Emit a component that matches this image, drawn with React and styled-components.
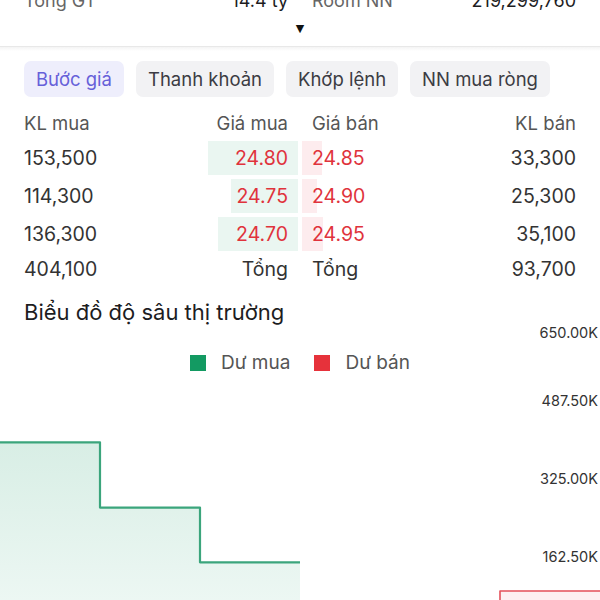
import React from 'react'
import styled, { createGlobalStyle } from 'styled-components'

const GlobalStyle = createGlobalStyle`
    body {
        margin: 0;
        background: #ffffff;
        font-family: Inter, 'Noto Sans', sans-serif;
        overflow: hidden;
    }
`;

const Page = styled.div`
    width: 600px;
    height: 600px;
    overflow: hidden;
    background: #ffffff;
`;

const StatsRow = styled.div`
    display: grid;
    grid-template-columns: 1fr 1fr;
    column-gap: 24px;
    padding: 0 24px;
    margin-top: -11px;
    font-size: 18px;
    line-height: 24px;
`;

const Stat = styled.div`
    display: flex;
    justify-content: space-between;
`;

const StatLabel = styled.span`
    color: #666666;
`;

const StatValue = styled.span`
    color: #1d1d1f;
`;

const Toggle = styled.div`
    height: 33px;
    padding-bottom: 3px;
    box-sizing: border-box;
    display: flex;
    align-items: center;
    justify-content: center;
    font-family: 'DejaVu Sans', sans-serif;
    font-size: 11px;
    color: #111111;
`;

const Divider = styled.div`
    height: 4px;
    border-top: 1px solid #e8e8e8;
    background: linear-gradient(#f4f4f4, #ffffff);
`;

const Tabs = styled.div`
    display: flex;
    gap: 12px;
    padding: 0 24px;
    margin-top: 10px;
`;

const Tab = styled.div`
    height: 36px;
    padding: 0 12px;
    display: flex;
    align-items: center;
    border-radius: 7px;
    font-size: 18.5px;
    background: ${p => (p.$active ? '#eeeefc' : '#f2f2f4')};
    color: ${p => (p.$active ? '#6660d9' : '#3c3c43')};
`;

const Book = styled.div`
    padding: 0 24px;
    margin-top: 10px;
`;

const BookRow = styled.div`
    display: grid;
    grid-template-columns: 1fr 1fr;
    column-gap: 4px;
    height: ${p => p.$h}px;
    font-size: ${p => (p.$head ? 18.5 : 19.5)}px;
    color: ${p => (p.$head ? '#555555' : '#333333')};
`;

const Half = styled.div`
    position: relative;
    display: flex;
    align-items: center;
    justify-content: space-between;
    padding: ${p => (p.$side === 'buy' ? '0 10px 0 0' : '0 0 0 10px')};
`;

const Bar = styled.div`
    position: absolute;
    top: 2px;
    bottom: 2px;
    ${p => (p.$side === 'buy' ? 'right: 0;' : 'left: 0;')}
    background: ${p => (p.$side === 'buy' ? '#eaf6f1' : '#fdecee')};
`;

const Cell = styled.span`
    position: relative;
    color: ${p => (p.$price ? '#e0333c' : 'inherit')};
`;

const Title = styled.div`
    margin-top: 13px;
    padding: 0 24px;
    font-size: 22px;
    line-height: 28px;
    color: #1d1d1f;
`;

const Chart = styled.div`
    position: relative;
    height: 300px;
`;

const Plot = styled.svg`
    position: absolute;
    left: 0;
    top: 0;
`;

const Legend = styled.div`
    position: relative;
    display: flex;
    justify-content: center;
    align-items: center;
    padding-top: 25px;
    line-height: 24px;
    font-size: 19px;
    color: #555555;
`;

const LegendItem = styled.div`
    display: flex;
    align-items: center;
    gap: 15px;
    margin: 0 12px;
`;

const Swatch = styled.span`
    width: 16px;
    height: 16px;
    background: ${p => p.$color};
`;

const rows = [
    { buyVol: '153,500', buy: '24.80', bv: 153500, sell: '24.85', sellVol: '33,300', sv: 33300 },
    { buyVol: '114,300', buy: '24.75', bv: 114300, sell: '24.90', sellVol: '25,300', sv: 25300 },
    { buyVol: '136,300', buy: '24.70', bv: 136300, sell: '24.95', sellVol: '35,100', sv: 35100 },
];

const barWidth = v => (v / 153500) * 90;

// chart scale: px per 1K and zero line, relative to chart top
const yOf = k => 309.8 - k * 0.4789;

const ticks = [
    { label: '650.00K', y: 8 },
    { label: '487.50K', y: 76 },
    { label: '325.00K', y: 154 },
    { label: '162.50K', y: 232 },
];

const App = () => {
    const b1 = yOf(404.1), b2 = yOf(267.8), b3 = yOf(153.5);
    const s1 = yOf(33.3), s2 = yOf(58.6), s3 = yOf(93.7);
    const bottom = 310;

    return (
        <Page>
            <GlobalStyle />
            <StatsRow>
                <Stat><StatLabel>Tổng GT</StatLabel><StatValue>14.4 tỷ</StatValue></Stat>
                <Stat><StatLabel>Room NN</StatLabel><StatValue>219,299,760</StatValue></Stat>
            </StatsRow>
            <Toggle>▼</Toggle>
            <Divider />
            <Tabs>
                <Tab $active>Bước giá</Tab>
                <Tab>Thanh khoản</Tab>
                <Tab>Khớp lệnh</Tab>
                <Tab>NN mua ròng</Tab>
            </Tabs>
            <Book>
                <BookRow $head $h={32}>
                    <Half $side='buy'><Cell>KL mua</Cell><Cell>Giá mua</Cell></Half>
                    <Half $side='sell'><Cell>Giá bán</Cell><Cell>KL bán</Cell></Half>
                </BookRow>
                {rows.map(r => (
                    <BookRow key={r.buy} $h={38}>
                        <Half $side='buy'>
                            <Bar $side='buy' style={{ width: barWidth(r.bv) }} />
                            <Cell>{r.buyVol}</Cell>
                            <Cell $price>{r.buy}</Cell>
                        </Half>
                        <Half $side='sell'>
                            <Bar $side='sell' style={{ width: barWidth(r.sv) }} />
                            <Cell $price>{r.sell}</Cell>
                            <Cell>{r.sellVol}</Cell>
                        </Half>
                    </BookRow>
                ))}
                <BookRow $h={32}>
                    <Half $side='buy'><Cell>404,100</Cell><Cell>Tổng</Cell></Half>
                    <Half $side='sell'><Cell>Tổng</Cell><Cell>93,700</Cell></Half>
                </BookRow>
            </Book>
            <Title>Biểu đồ độ sâu thị trường</Title>
            <Chart>
                <Plot width='600' height='300' viewBox='0 0 600 300'>
                    <defs>
                        <linearGradient id='buyFill' x1='0' y1='0' x2='0' y2='1'>
                            <stop offset='0%' stopColor='#d8eee5' />
                            <stop offset='100%' stopColor='#f1f9f6' />
                        </linearGradient>
                    </defs>
                    <path
                        d={`M0 ${b1} H100 V${b2} H200 V${b3} H300 V${bottom} H0 Z`}
                        fill='url(#buyFill)'
                    />
                    <path
                        d={`M0 ${b1} H100 V${b2} H200 V${b3} H300`}
                        fill='none'
                        stroke='#3ba57c'
                        strokeWidth='2.2'
                        strokeLinejoin='round'
                    />
                    <path
                        d={`M300 ${s1} H400 V${s2} H500 V${s3} H602 V${bottom} H300 Z`}
                        fill='#fdf0f1'
                        stroke='#e4505a'
                        strokeWidth='1.6'
                        strokeLinejoin='round'
                    />
                    {ticks.map(t => (
                        <text
                            key={t.label}
                            x='598'
                            y={t.y}
                            textAnchor='end'
                            dominantBaseline='middle'
                            fontSize='14.5'
                            fill='#333333'
                            fontFamily='Inter, sans-serif'
                        >
                            {t.label}
                        </text>
                    ))}
                </Plot>
                <Legend>
                    <LegendItem><Swatch $color='#139a62' />Dư mua</LegendItem>
                    <LegendItem><Swatch $color='#e6323b' />Dư bán</LegendItem>
                </Legend>
            </Chart>
        </Page>
    )
}

export default App
